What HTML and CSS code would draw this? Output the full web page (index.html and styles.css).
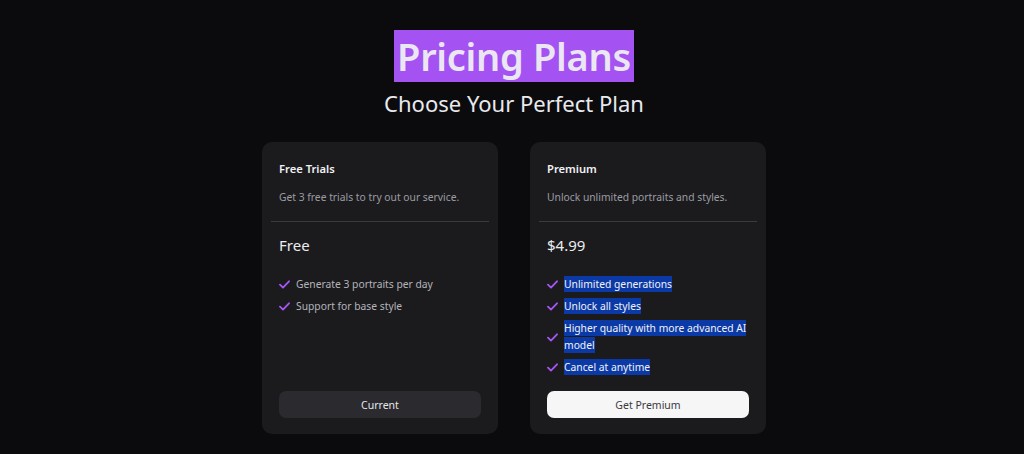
FILE: index.html
```html
<!DOCTYPE html>
<html lang="en">
<head>
<meta charset="utf-8">
<title>Pricing Plans</title>
<link rel="stylesheet" href="styles.css">
</head>
<body>
<main class="page">
  <header class="hero">
    <h1 class="title"><span class="title-mark">Pricing Plans</span></h1>
    <p class="subtitle">Choose Your Perfect Plan</p>
  </header>
  <section class="plans">
    <article class="card">
      <h2 class="card-name">Free Trials</h2>
      <p class="card-desc">Get 3 free trials to try out our service.</p>
      <hr class="divider">
      <div class="price">Free</div>
      <ul class="features">
        <li class="feature"><svg class="check" viewBox="0 0 12 10"><path d="M1 5.2 4.3 8.4 11 1.4"/></svg><span class="feat-text">Generate 3 portraits per day</span></li>
        <li class="feature"><svg class="check" viewBox="0 0 12 10"><path d="M1 5.2 4.3 8.4 11 1.4"/></svg><span class="feat-text">Support for base style</span></li>
      </ul>
      <button class="btn btn-dark">Current</button>
    </article>
    <article class="card">
      <h2 class="card-name">Premium</h2>
      <p class="card-desc">Unlock unlimited portraits and styles.</p>
      <hr class="divider">
      <div class="price">$4.99</div>
      <ul class="features">
        <li class="feature"><svg class="check" viewBox="0 0 12 10"><path d="M1 5.2 4.3 8.4 11 1.4"/></svg><span class="feat-text"><span class="sel">Unlimited generations</span></span></li>
        <li class="feature"><svg class="check" viewBox="0 0 12 10"><path d="M1 5.2 4.3 8.4 11 1.4"/></svg><span class="feat-text"><span class="sel">Unlock all styles</span></span></li>
        <li class="feature"><svg class="check" viewBox="0 0 12 10"><path d="M1 5.2 4.3 8.4 11 1.4"/></svg><span class="feat-text"><span class="sel">Higher quality with more advanced AI model</span></span></li>
        <li class="feature"><svg class="check" viewBox="0 0 12 10"><path d="M1 5.2 4.3 8.4 11 1.4"/></svg><span class="feat-text"><span class="sel">Cancel at anytime</span></span></li>
      </ul>
      <button class="btn btn-light">Get Premium</button>
    </article>
  </section>
</main>
</body>
</html>
```
FILE: styles.css
```css
* { box-sizing: border-box; }
html, body {
  margin: 0;
  padding: 0;
  background: #0b0b0d;
}
body {
  font-family: "Noto Sans", "Open Sans", sans-serif;
  color: #e8e6ee;
}
.page {
  padding: 30px 0 0 4px;
  display: flex;
  flex-direction: column;
  align-items: center;
}
.hero {
  display: flex;
  flex-direction: column;
  align-items: center;
}
.title {
  margin: 0;
  font-size: 38px;
  font-weight: 600;
  line-height: 53px;
  letter-spacing: -0.3px;
}
.title-mark {
  background: #a452f2;
  color: #ebe7f2;
  padding: 0 3px;
}
.subtitle {
  margin: 4px 0 0;
  font-size: 22px;
  line-height: 32px;
  color: #e9e9ee;
  font-weight: 400;
}
.plans {
  margin-top: 23px;
  display: flex;
  gap: 32px;
  align-items: stretch;
}
.card {
  width: 236px;
  background: #1b1b1e;
  border-radius: 10px;
  padding: 19px 17px 16px;
  display: flex;
  flex-direction: column;
}
.card-name {
  margin: 0;
  font-size: 11.2px;
  font-weight: 600;
  line-height: 16px;
  color: #f1f1f3;
}
.card-desc {
  margin: 12px 0 0;
  font-size: 10.3px;
  line-height: 16px;
  color: #9c9ca2;
}
.divider {
  margin: 16px -8px 0;
  border: 0;
  height: 1px;
  background: #3a3a3e;
}
.price {
  margin-top: 13px;
  font-size: 15px;
  line-height: 20px;
  color: #ececef;
}
.features {
  list-style: none;
  margin: 21px 0 0;
  padding: 0;
  display: flex;
  flex-direction: column;
  gap: 5px;
}
.feature {
  display: flex;
  align-items: center;
  gap: 6px;
  font-size: 10.3px;
  line-height: 17px;
  color: #b4b4ba;
}
.check {
  flex: none;
  width: 11px;
  height: 9px;
  fill: none;
  stroke: #a855f7;
  stroke-width: 2;
  stroke-linecap: round;
  stroke-linejoin: round;
}
.sel {
  background: #0b3aa6;
  color: #f2f2f6;
  padding: 1px 0;
}
.btn {
  margin-top: auto;
  height: 27px;
  border: 0;
  border-radius: 7px;
  font-family: inherit;
  font-size: 10.5px;
}
.btn-dark {
  background: #2a2a2f;
  color: #e6e6ea;
}
.btn-light {
  background: #f6f6f7;
  color: #3a3a3e;
}
.card:last-child .btn { margin-top: 15px; }
```
